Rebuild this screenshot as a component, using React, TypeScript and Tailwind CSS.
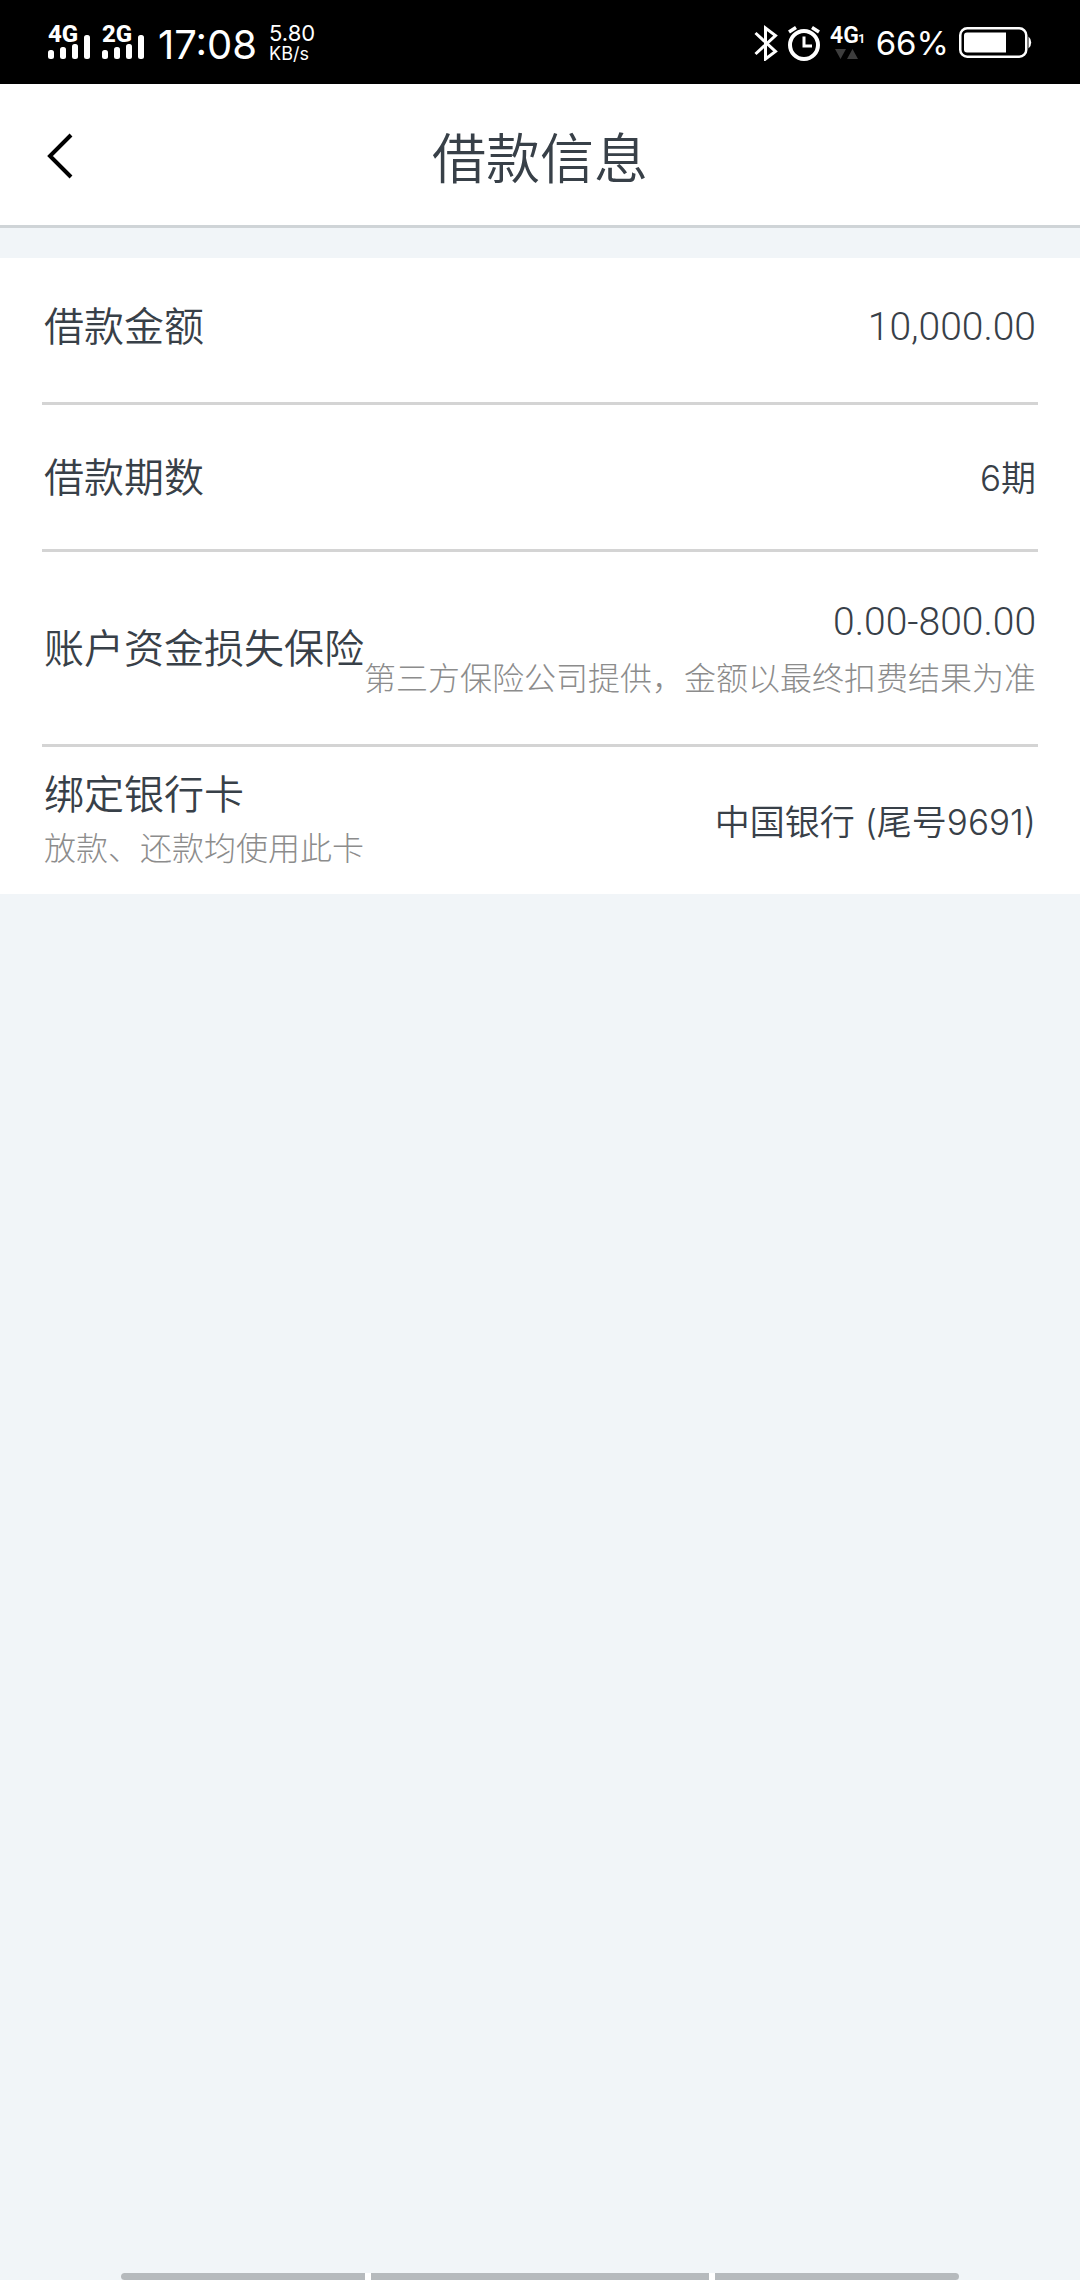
import type { ReactNode } from "react";

type LoanItem = {
  label: string;
  /** label の下に出す補足 */
  labelNote?: string;
  value: string;
  /** value の下に出す補足 */
  valueNote?: string;
  /** 金額は数字専用のフォントで表示 */
  isAmount?: boolean;
  className: string;
};

const items: LoanItem[] = [
  { label: "借款金额", value: "10,000.00", isAmount: true, className: "min-h-[147px] pb-2" },
  { label: "借款期数", value: "6期", className: "min-h-[147px]" },
  {
    label: "账户资金损失保险",
    value: "0.00-800.00",
    valueNote: "第三方保险公司提供，金额以最终扣费结果为准",
    isAmount: true,
    className: "min-h-[195px]",
  },
  {
    label: "绑定银行卡",
    labelNote: "放款、还款均使用此卡",
    value: "中国银行 (尾号9691)",
    className: "min-h-[147px]",
  },
];

/** 電波強度（回線種別 + 4 本のバー） */
function Signal({ network }: { network: string }) {
  return (
    <svg viewBox="0 -8 42 52" className="h-[52px] w-[42px] fill-white" aria-label={network}>
      <text x="0" y="17" fontSize="24" className="font-['Roboto',sans-serif] font-extrabold">
        {network}
      </text>
      <rect x="0" y="25" width="6" height="9" rx="2.5" />
      <rect x="12" y="22" width="6" height="12" rx="2.5" />
      <rect x="24" y="19" width="6" height="15" rx="2.5" />
      <rect x="36" y="10" width="6" height="24" rx="2.5" />
    </svg>
  );
}

function BluetoothIcon() {
  return (
    <svg viewBox="0 0 24 36" className="h-9 w-6 fill-none stroke-white stroke-3" aria-hidden="true">
      <path d="M1.5 8 21.500 26.500 11.500 34V3L21.500 10.500 1.500 29" />
    </svg>
  );
}

function AlarmIcon() {
  return (
    <svg viewBox="0 0 32 36" className="h-9 w-8 fill-none stroke-white" aria-hidden="true">
      <circle cx="16" cy="20" r="14" strokeWidth="4" />
      <path d="M16 11.500V21h8" strokeWidth="3" />
      <path d="M1 7 8 2.500M31 7 24 2.500" strokeWidth="3.500" />
    </svg>
  );
}

/** データ通信中の SIM と上下矢印 */
function DataIcon() {
  return (
    <svg viewBox="0 -8 36 52" className="h-[52px] w-9 fill-white" aria-label="4G1">
      <text x="0" y="18" fontSize="23" className="font-['Roboto',sans-serif] font-semibold">
        4G
      </text>
      <text x="28" y="18" fontSize="13" className="font-['Roboto',sans-serif] font-semibold">
        1
      </text>
      <path d="M5 24h11l-5.500 10zM17 34h11l-5.500-10z" className="fill-[#3d3d3d]" />
    </svg>
  );
}

function BatteryIcon() {
  return (
    <svg viewBox="0 0 73 32" className="h-8 w-[73px]" aria-hidden="true">
      <rect x="1.250" y="1.250" width="66" height="28.500" rx="7" fill="none" stroke="#fff" strokeWidth="2.500" />
      <path d="M8 5.500h39v20H8a3 3 0 0 1-3-3v-14a3 3 0 0 1 3-3z" fill="#fff" />
      <path d="M69.500 9.500a8 8 0 0 1 0 12z" fill="#fff" />
    </svg>
  );
}

function StatusBar() {
  return (
    <div className="flex h-[84px] items-center justify-between bg-black px-12 pt-[2px] font-['Inter',sans-serif] text-white">
      <div className="flex items-center gap-3">
        <Signal network="4G" />
        <Signal network="2G" />
        <span className="pt-1 pl-[2px] text-[40px] leading-none">17:08</span>
        <div className="flex flex-col">
          <span className="text-[22px] leading-[22px]">5.80</span>
          <span className="text-[18px] leading-5">KB/s</span>
        </div>
      </div>
      <div className="flex items-center gap-[10px]">
        <BluetoothIcon />
        <AlarmIcon />
        <DataIcon />
        <span className="text-[33px] leading-none">66%</span>
        <BatteryIcon />
      </div>
    </div>
  );
}

function Header({ title }: { title: string }) {
  return (
    <header className="grid h-36 grid-cols-[1fr_auto_1fr] items-center border-b-3 border-[#cfd4d7] bg-white px-[42px] pt-[2px]">
      <button type="button" aria-label="返回" className="justify-self-start p-1">
        <svg viewBox="0 0 28 46" className="h-[46px] w-7 fill-none stroke-black stroke-4" aria-hidden="true">
          <path d="M25 2 4 23 25 44" />
        </svg>
      </button>
      <h1 className="text-[54px] leading-none font-[350]">{title}</h1>
    </header>
  );
}

/** 補足テキスト */
function Note({ children }: { children: ReactNode }) {
  return <span className="text-[32px] leading-[54px] font-light whitespace-nowrap text-[#8c8c8c]">{children}</span>;
}

function LoanRow({ item }: { item: LoanItem }) {
  return (
    <div
      className={`flex items-center justify-between border-b-3 border-[#d4d4d4] px-[2px] last:border-b-0 ${item.className}`}
    >
      <dt className="flex flex-col pb-1 whitespace-nowrap">
        <span className="text-[40px] leading-[54px]">{item.label}</span>
        {item.labelNote && <Note>{item.labelNote}</Note>}
      </dt>
      <dd className="flex flex-col items-end pt-[2px] whitespace-nowrap">
        {item.isAmount ? (
          <span className="font-['Roboto',sans-serif] text-[39px] leading-[54px] font-light">{item.value}</span>
        ) : (
          <span className="font-['Inter','Noto_Sans_CJK_SC',sans-serif] text-[35px] leading-[54px]">
            {item.value}
          </span>
        )}
        {item.valueNote && <Note>{item.valueNote}</Note>}
      </dd>
    </div>
  );
}

export default function App() {
  return (
    <div className="flex min-h-screen flex-col bg-[#f1f5f8] font-['Noto_Sans_CJK_SC',sans-serif] text-[#384048]">
      <StatusBar />
      <Header title="借款信息" />
      <main className="flex-1 pt-[30px]">
        <dl className="bg-white px-[42px] font-[350]">
          {items.map((item) => (
            <LoanRow key={item.label} item={item} />
          ))}
        </dl>
      </main>

      {/* ジェスチャーバー */}
      <div className="px-[121px]">
        <div className="flex h-[7px] gap-[6px] overflow-hidden rounded-l-full rounded-r-full bg-white">
          <div className="flex-[244] bg-[#b6babd]" />
          <div className="flex-[338] bg-[#b6babd]" />
          <div className="flex-[244] bg-[#b6babd]" />
        </div>
      </div>
    </div>
  );
}
